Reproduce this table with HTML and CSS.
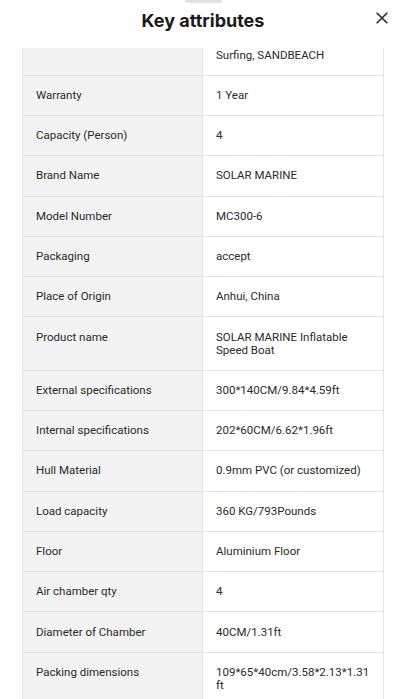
FILE: index.html
```html
<!DOCTYPE html>
<html lang="en">
<head>
<meta charset="utf-8">
<title>Key attributes</title>
<link rel="stylesheet" href="styles.css">
</head>
<body>
<div class="sheet">
  <div class="handle"></div>
  <header class="head">
    <h1 class="title">Key attributes</h1>
    <button class="close" aria-label="Close">
      <svg width="12" height="12" viewBox="0 0 12 12"><path d="M0.7 0.7L11.3 11.3M11.3 0.7L0.7 11.3" stroke="#222" stroke-width="1.5" fill="none"/></svg>
    </button>
  </header>
  <div class="scroll">
    <div class="table">
      <div class="row"><div class="k">Application</div><div class="v">Fishing, Rowing, Rescue<br>Surfing, SANDBEACH</div></div>
      <div class="row"><div class="k">Warranty</div><div class="v">1 Year</div></div>
      <div class="row"><div class="k">Capacity (Person)</div><div class="v">4</div></div>
      <div class="row"><div class="k">Brand Name</div><div class="v">SOLAR MARINE</div></div>
      <div class="row"><div class="k">Model Number</div><div class="v">MC300-6</div></div>
      <div class="row"><div class="k">Packaging</div><div class="v">accept</div></div>
      <div class="row"><div class="k">Place of Origin</div><div class="v">Anhui, China</div></div>
      <div class="row"><div class="k">Product name</div><div class="v">SOLAR MARINE Inflatable<br>Speed Boat</div></div>
      <div class="row"><div class="k">External specifications</div><div class="v">300*140CM/9.84*4.59ft</div></div>
      <div class="row"><div class="k">Internal specifications</div><div class="v">202*60CM/6.62*1.96ft</div></div>
      <div class="row"><div class="k">Hull Material</div><div class="v">0.9mm PVC (or customized)</div></div>
      <div class="row"><div class="k">Load capacity</div><div class="v">360 KG/793Pounds</div></div>
      <div class="row"><div class="k">Floor</div><div class="v">Aluminium Floor</div></div>
      <div class="row"><div class="k">Air chamber qty</div><div class="v">4</div></div>
      <div class="row"><div class="k">Diameter of Chamber</div><div class="v">40CM/1.31ft</div></div>
      <div class="row"><div class="k">Packing dimensions</div><div class="v">109*65*40cm/3.58*2.13*1.31<br>ft</div></div>
      <div class="row"><div class="k">Weight</div><div class="v">45 KG</div></div>
    </div>
  </div>
</div>
</body>
</html>
```

FILE: styles.css
```css
* { box-sizing: border-box; }
html, body { margin: 0; padding: 0; background: #fff; }
body {
  font-family: Roboto, "Noto Sans", "Liberation Sans", sans-serif;
  color: #222;
  width: 406px;
  height: 699px;
  overflow: hidden;
}
.sheet {
  display: flex;
  flex-direction: column;
  height: 699px;
}
.handle {
  width: 37px;
  height: 3px;
  background: #e2e2e2;
  margin: 0 auto;
  border-radius: 0 0 2px 2px;
}
.head {
  height: 45px;
  display: flex;
  align-items: center;
  justify-content: center;
  position: relative;
}
.title {
  margin: 0;
  margin-top: -11px;
  font-family: Inter, "Noto Sans", sans-serif;
  font-size: 18px;
  font-weight: 700;
  color: #1a1a1a;
}
.close {
  position: absolute;
  right: 18px;
  top: 9px;
  width: 12px;
  height: 12px;
  padding: 0;
  border: 0;
  background: none;
  display: flex;
}
.scroll {
  flex: 1;
  overflow: hidden;
  margin: 0 22px;
}
.table {
  margin-top: -25.5px;
  border-left: 1px solid #e4e4e4;
  border-right: 1px solid #e4e4e4;
}
.row {
  display: grid;
  grid-template-columns: 180px 1fr;
  border-bottom: 1px solid #e4e4e4;
}
.k, .v {
  font-size: 11.5px;
  line-height: 13px;
  padding: 13.15px 13px;
  color: #2a2a2a;
}
.k {
  background: #f3f3f3;
  border-right: 1px solid #e4e4e4;
}
.v {
  background: #fff;
}
```
